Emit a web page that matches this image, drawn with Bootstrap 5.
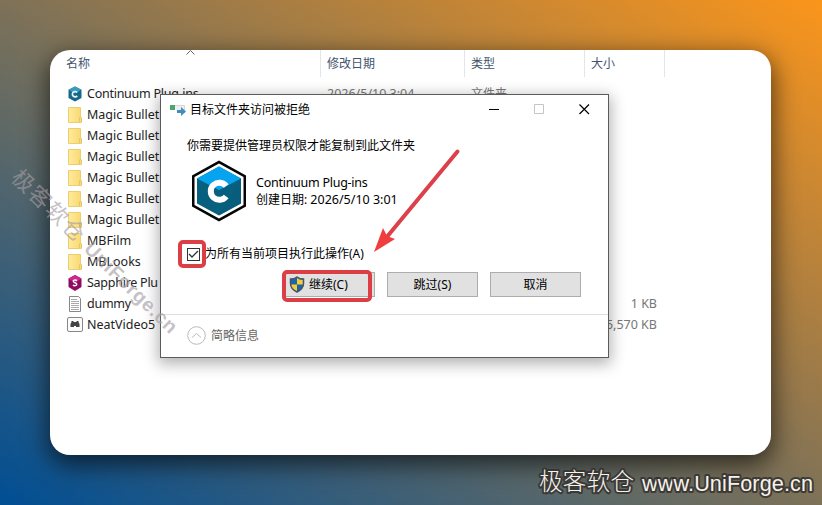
<!DOCTYPE html>
<html lang="zh-CN">
<head>
<meta charset="utf-8">
<meta name="viewport" content="width=device-width, initial-scale=1">
<title>目标文件夹访问被拒绝</title>
<link rel="stylesheet" href="https://cdn.jsdelivr.net/npm/bootstrap@5.3.0/dist/css/bootstrap.min.css">
<style>
body{width:822px;height:505px;overflow:hidden;padding:50px 51px 50px 50px;background:linear-gradient(to top right,#004e94,#fb951b);font:12px/16px "Noto Sans","Noto Sans CJK SC",sans-serif;color:#000}
.explorer{height:405px;border-radius:20px;box-shadow:0 8px 24px 2px rgba(0,0,0,.62)}
.heads{height:27px;color:#44546f}
.heads>div{border-right:1px solid #e2e5ea;padding:6px 0 0 6px}
.c-name{width:271px}.c-date{width:144px}.c-type{width:120px}.c-size{width:80px}
.files{padding-top:6px}
.entry{height:21px;color:#777}
.entry .c-name{padding-left:17px;color:#222}
.entry .c-date,.entry .c-type{padding-left:6px}
.entry .c-size{padding-right:8px}
.entry svg{width:16px;height:16px;margin-right:4px}
.latin{font-size:12.5px;letter-spacing:0;white-space:nowrap}
.tight{letter-spacing:-.26px}
.sorter{left:136px;top:0}
.prompt{left:160px;top:94px;width:449px;height:264px;border:1px solid #5b5b5b;box-shadow:0 4px 14px 2px rgba(0,0,0,.3)}
.titlebar{height:29px;padding:0 18px 0 9px}
.wincontrols{gap:34px}
.content{height:190px;padding:14px 27px 0 26px}
.item{height:62px;margin-top:6px;gap:9px}
.item .latin{line-height:17px}
.check{width:13px;height:13px;border:1px solid #333;margin-right:5px}
.agree{margin-top:24px;height:16px}
.actions{gap:12px;margin-top:10px}
.actions .btn{width:91px;height:25px;padding:0;border:1px solid #adadad;border-radius:0;background:#e1e1e1;font-size:12px;line-height:23px;color:#000}
.less{height:43px;border-top:1px solid #dfdfdf;padding-left:26px;color:#666}
.overlay{left:0;top:0;pointer-events:none}
</style>
<script src="https://cdn.jsdelivr.net/npm/bootstrap@5.3.0/dist/js/bootstrap.bundle.min.js"></script>
</head>
<body class="position-relative">
<svg width="0" height="0" class="position-absolute">
<defs>
<linearGradient id="yel"><stop stop-color="#ffeb9c"/><stop offset="1" stop-color="#f8d970"/></linearGradient>
<symbol id="folder" viewBox="0 0 16 16"><path d="M1.500.5h12v10l1 1v4h-13z" fill="url(#yel)" stroke="#ecce72"/><path d="M12.500 15v-4l1-1 1 1v4" fill="#f9dc80" stroke="#dfba55" stroke-width=".7"/></symbol>
<symbol id="hexc" viewBox="0 0 56 62"><path d="M28 .5 55 15.500v31L28 61.500 1 46.500v-31z" fill="#050505"/><path d="M28 3.500 52.500 17v28L28 58.500 3.500 45V17z" fill="#fff"/><path d="M28 6.500 50 18.500v25L28 55.500 6 43.500v-25z" fill="#08607f"/><path d="M28 6.500 50 18.500 28 30 6 18.500z" fill="#06a4ef"/><path d="M50 18.500v25L28 55.500z" fill="#07587a" fill-opacity=".5"/><path d="M35.200 26a8.600 8.600 0 1 0 0 10.500" fill="none" stroke="#fff" stroke-width="6"/></symbol>
</defs></svg>

<main class="explorer bg-white position-relative">
<svg class="sorter position-absolute" width="9" height="5" fill="none" stroke="#666"><path d="m.5 4.500 4-4 4 4"/></svg>
<div class="heads d-flex"><div class="c-name ps-3">名称</div><div class="c-date">修改日期</div><div class="c-type">类型</div><div class="c-size">大小</div></div>
<div class="files">
<div class="entry d-flex align-items-center"><div class="c-name d-flex align-items-center"><svg viewBox="0 0 16 16"><path d="m8 .5 6.500 3.300v8.300L8 15.500l-6.500-3.400V3.800z" fill="#176887"/><path d="m8 .5 6.500 3.300L8 7.500 1.500 3.800z" fill="#3a9ac0"/><path d="M10.200 6.500a2.700 2.700 0 1 0 0 3.400" fill="none" stroke="#e9f6fb" stroke-width="1.700"/></svg><span class="latin tight">Continuum Plug-ins</span></div><div class="c-date latin">2026/5/10 3:04</div><div class="c-type">文件夹</div></div>
<div class="entry d-flex"><div class="c-name d-flex align-items-center"><svg><use href="#folder"/></svg><span class="latin">Magic Bullet</span></div></div>
<div class="entry d-flex"><div class="c-name d-flex align-items-center"><svg><use href="#folder"/></svg><span class="latin">Magic Bullet</span></div></div>
<div class="entry d-flex"><div class="c-name d-flex align-items-center"><svg><use href="#folder"/></svg><span class="latin">Magic Bullet</span></div></div>
<div class="entry d-flex"><div class="c-name d-flex align-items-center"><svg><use href="#folder"/></svg><span class="latin">Magic Bullet</span></div></div>
<div class="entry d-flex"><div class="c-name d-flex align-items-center"><svg><use href="#folder"/></svg><span class="latin">Magic Bullet</span></div></div>
<div class="entry d-flex"><div class="c-name d-flex align-items-center"><svg><use href="#folder"/></svg><span class="latin">Magic Bullet</span></div></div>
<div class="entry d-flex"><div class="c-name d-flex align-items-center"><svg><use href="#folder"/></svg><span class="latin">MBFilm</span></div></div>
<div class="entry d-flex"><div class="c-name d-flex align-items-center"><svg><use href="#folder"/></svg><span class="latin">MBLooks</span></div></div>
<div class="entry d-flex"><div class="c-name d-flex align-items-center"><svg viewBox="0 0 16 16"><path d="m8 0 6.500 3.600v8.500L8 16l-6.500-3.900V3.600z" fill="#8d0b62"/><path d="m8 0 6.500 3.600L8 8 1.500 3.600z" fill="#cd298c"/><path d="M10 5.500C8 4.500 6 5 6.300 6.500c.2 1.500 3.500 1 3.500 2.800 0 1.500-2.300 1.800-3.900.8" fill="none" stroke="#fff" stroke-width="1.400"/></svg><span class="latin tight">Sapphire Plu</span></div></div>
<div class="entry d-flex align-items-center"><div class="c-name d-flex align-items-center"><svg viewBox="0 0 16 16" fill="#fff" stroke="#888"><path d="M2.500.5h9l2 2v13h-11z"/><path d="M4 3.500h6M4 5.500h8M4 7.500h8M4 9.500h8M4 11.500h8M4 13.500h8" stroke="#aaa"/></svg><span class="latin tight">dummy</span></div><div class="c-date"></div><div class="c-type"></div><div class="c-size latin text-end">1 KB</div></div>
<div class="entry d-flex align-items-center"><div class="c-name d-flex align-items-center"><svg viewBox="0 0 16 16"><rect x=".5" y=".5" width="15" height="14" rx="1.500" fill="#fbfbfb" stroke="#888"/><path d="M4.500 5V4h2v1h3V4h2v1l1 2v3H9V9H7v1H3.500V7z" fill="#444"/></svg><span class="latin">NeatVideo5</span></div><div class="c-date"></div><div class="c-type"></div><div class="c-size latin text-end">5,570 KB</div></div>
</div>
</main>

<section class="prompt bg-white position-absolute d-flex flex-column">
<div class="titlebar d-flex align-items-center">
<svg width="16" height="14" class="me-1"><path d="M4.500 2.500h10v7h-7" fill="#eee" stroke="#d5d9dc"/><path d="M0 2h5v5H0z" fill="#4ca66a"/><path d="M7 7h4V4l5 4.500-5 4.500v-3H7z" fill="#438dbe"/></svg>
<span class="me-auto">目标文件夹访问被拒绝</span>
<div class="wincontrols d-flex align-items-center"><svg width="11" height="11"><path d="M0 5.500h10" stroke="#000"/></svg><svg width="11" height="11"><path d="M.5.500h9v9h-9z" fill="none" stroke="#c5c5c5"/></svg><svg width="11" height="11"><path d="m.5.500 9.500 9.500M10 .5.500 10" stroke="#000" stroke-width="1.200"/></svg></div>
</div>
<div class="content">
<div>你需要提供管理员权限才能复制到此文件夹</div>
<div class="item d-flex align-items-center"><svg width="60" height="62"><use href="#hexc" x="4" width="56" height="62"/></svg><div><div class="latin tight">Continuum Plug-ins</div><div>创建日期: <span class="latin">2026/5/10 3:01</span></div></div></div>
<div class="agree d-flex align-items-center"><span class="check d-flex"><svg width="11" height="11" fill="none" stroke="#333" stroke-width="1.300"><path d="m1 5 3 3 6-6"/></svg></span>为所有当前项目执行此操作(A)</div>
<div class="actions d-flex justify-content-end"><button class="btn d-flex align-items-center"><svg width="16" height="17" viewBox="0 0 16 17" class="ms-1 me-1"><path d="M8 1c2 1.500 4 2 6.500 2v4.500c0 4-2.500 6.500-6.500 8.500-4-2-6.500-4.500-6.500-8.500V3C4 3 6 2.500 8 1z" fill="#1b65ad" stroke="#485463" stroke-width="1.500"/><path d="M8 2c1.500 1 3 2 5.700 2v4.500H8zM2.300 8.500H8V15c-3.500-1.700-5.400-3.500-5.700-6.500z" fill="#f9cb35"/></svg>继续(C)</button><button class="btn">跳过(S)</button><button class="btn">取消</button></div>
</div>
<div class="less d-flex align-items-center"><svg width="20" height="20" fill="none" stroke="#bbb" class="me-1"><circle cx="9.500" cy="9.500" r="8.800"/><path d="m5 11.500 4.500-4 4.500 4"/></svg>简略信息</div>
</section>

<svg class="overlay position-absolute" width="822" height="505">
<rect x="180" y="242" width="24" height="24" rx="3" fill="none" stroke="#dc3e46" stroke-width="4"/>
<rect x="284" y="272" width="86" height="28" rx="3" fill="none" stroke="#dc3e46" stroke-width="4"/>
<path d="M457.500 151.500 386 238" stroke="#dc414a" stroke-width="4" stroke-linecap="round"/><path d="m374 252 9-24 4 8 8 3z" fill="#f23d3f"/>
<g font-family="Liberation Sans,Noto Sans CJK SC,sans-serif">
<g transform="translate(10 179) rotate(44.200)" fill="#a59da3" fill-opacity=".65"><text font-size="22" textLength="92">极客软仓</text><text x="102" font-size="19.500" font-weight="700" textLength="121">UniForge.cn</text></g>
<g fill="#f5f2ed" stroke="#35322f" stroke-width="4" stroke-opacity=".85" stroke-linejoin="round" paint-order="stroke"><text x="539" y="490" font-size="23.500" font-weight="300" textLength="95">极客软仓</text><text x="642" y="491" font-size="21.700" textLength="171">www.UniForge.cn</text></g>
</g></svg>
</body>
</html>
